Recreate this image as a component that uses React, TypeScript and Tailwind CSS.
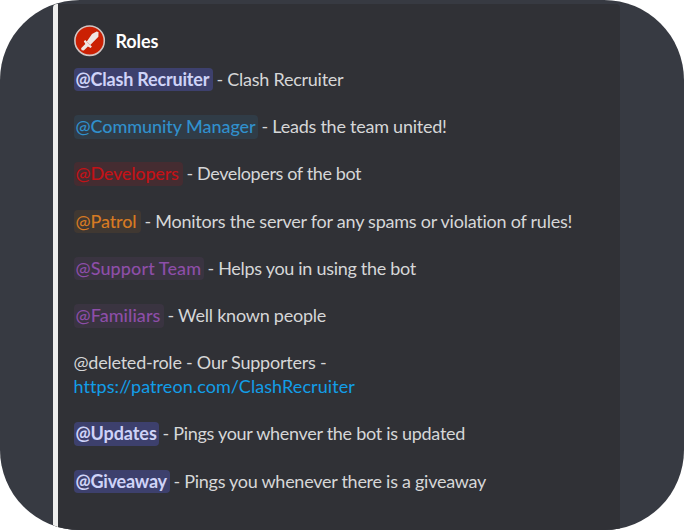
type Role = { mention: string; pill: string; text: string; textStyle: string };

const roles: Role[] = [
  { mention: '@Clash Recruiter', pill: 'w-[139px] bg-[#3d406d] text-[#cfd3f8] font-bold tracking-[-0.19px]', text: '- Clash Recruiter', textStyle: 'tracking-[-0.25px]' },
  { mention: '@Community Manager', pill: 'w-[184px] bg-[#303c47] text-[#3090cc] font-medium tracking-[-0.07px]', text: '- Leads the team united!', textStyle: 'tracking-[-0.24px]' },
  { mention: '@Developers', pill: 'w-[109px] bg-[#452c31] text-[#c31217] font-medium tracking-[-0.18px]', text: '- Developers of the bot', textStyle: 'tracking-[-0.38px]' },
  { mention: '@Patrol', pill: 'w-[67px] bg-[#403832] text-[#d67a23] font-medium tracking-[-0.12px]', text: '- Monitors the server for any spams or violation of rules!', textStyle: 'tracking-[-0.24px]' },
  { mention: '@Support Team', pill: 'w-[130px] bg-[#3a3441] text-[#8d4ea8] font-medium tracking-[0.11px]', text: '- Helps you in using the bot', textStyle: 'tracking-[-0.3px]' },
  { mention: '@Familiars', pill: 'w-[90px] bg-[#3a3441] text-[#8d4ea8] font-medium tracking-[0.06px]', text: '- Well known people', textStyle: 'tracking-[-0.23px]' },
];

const pings: Role[] = [
  { mention: '@Updates', pill: 'w-[85px] bg-[#3d406d] text-[#cfd3f8] font-bold tracking-[-0.08px]', text: '- Pings your whenver the bot is updated', textStyle: 'tracking-[-0.29px]' },
  { mention: '@Giveaway', pill: 'w-[96px] bg-[#3d406d] text-[#cfd3f8] font-bold tracking-[-0.22px]', text: '- Pings you whenever there is a giveaway', textStyle: 'tracking-[-0.27px]' },
];

function RoleRow({ role }: { role: Role }) {
  return (
    <div className="flex h-[47.3px] items-start">
      <span className={`h-[23.6px] shrink-0 rounded-[4px] pl-[2px] ${role.pill}`}>{role.mention}</span>
      <span className={`ml-1 ${role.textStyle}`}>{role.text}</span>
    </div>
  );
}

function SwordBadge() {
  return (
    <svg width="32" height="32" viewBox="0 0 32 32">
      <circle cx="15.6" cy="15.7" r="14.7" fill="#cb2003" stroke="#d2c5c3" strokeWidth="1.6" />
      <path
        d="M22.6 6.6 L24.5 7 L24.4 11.8 L16.3 20.1 L17.9 21.6 L16.7 23.1 L13.9 21.5 L9.8 25.6 L7.6 25.2 L7.1 23.2 L11.3 18.9 L9.8 16.2 L11.2 14.9 L12.8 16.4 L18 9 Z"
        fill="#efe5e2"
      />
      <path d="M12.8 16.7 L16.1 20" stroke="#dc9b90" strokeWidth="0.7" />
    </svg>
  );
}

export default function App() {
  return (
    <div className="h-[530px] w-[684px] overflow-hidden bg-white">
      <div className="flex h-full w-full overflow-hidden rounded-[80px] bg-[#373a42] pl-[52.5px] pt-1">
        <div className="flex h-[540px] w-[567px] overflow-hidden rounded-[4px] bg-[#303136]">
          <div className="w-[5.5px] shrink-0 bg-[#eeeeed]" />
          <div className="whitespace-nowrap pl-[15.5px] pt-[21.2px] font-['Lato','Liberation_Sans',sans-serif] text-[18px] leading-[23.6px] text-[#d6d7d8] [font-variant-ligatures:none]">
            <header className="flex h-[42.5px] items-start">
              <SwordBadge />
              <h1 className="ml-[10px] mt-[5px] font-bold tracking-[-0.1px] text-white">Roles</h1>
            </header>
            {roles.map((role) => (
              <RoleRow key={role.mention} role={role} />
            ))}
            <div className="h-[70.9px]">
              <p className="tracking-[-0.23px]">@deleted-role - Our Supporters -</p>
              <a className="tracking-[0.07px] text-[#129ee8]">https://patreon.com/ClashRecruiter</a>
            </div>
            {pings.map((role) => (
              <RoleRow key={role.mention} role={role} />
            ))}
          </div>
        </div>
      </div>
    </div>
  );
}
